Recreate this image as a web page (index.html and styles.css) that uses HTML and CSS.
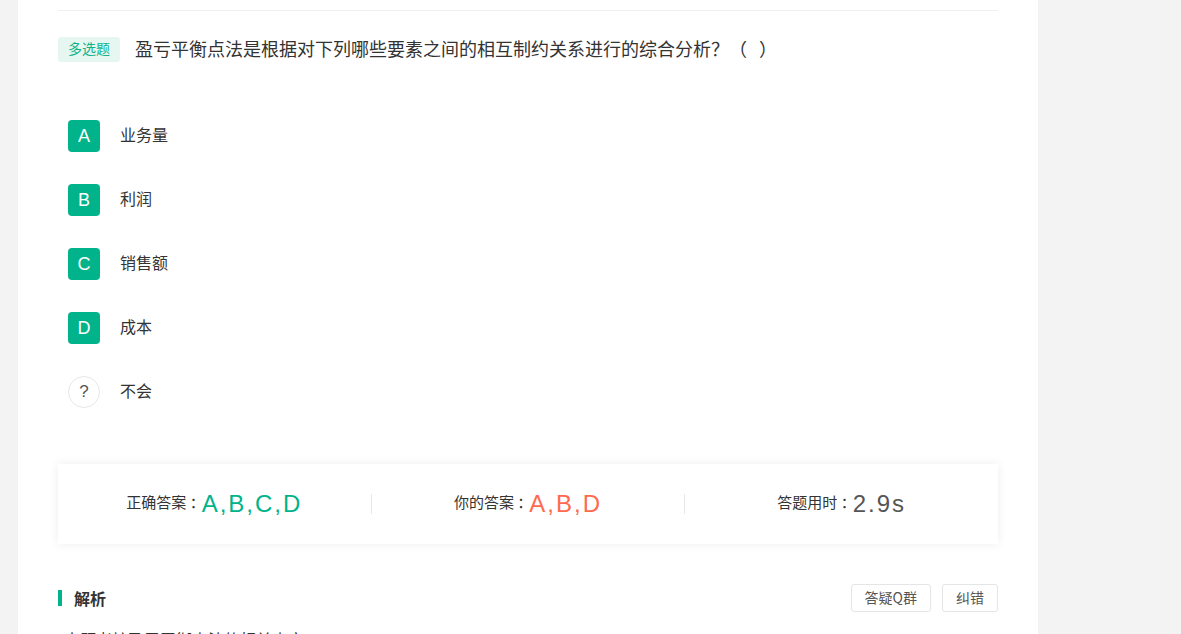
FILE: index.html
```html
<!DOCTYPE html>
<html lang="zh-CN">
<head>
    <meta charset="UTF-8">
    <meta name="viewport" content="width=device-width, initial-scale=1.0">
    <title>题目解析</title>
    <link rel="stylesheet" href="styles.css">
</head>
<body>
    <div class="page">
        <div class="panel">
            <div class="top-line"></div>

            <div class="question">
                <span class="tag">多选题</span>
                <span class="q-text">盈亏平衡点法是根据对下列哪些要素之间的相互制约关系进行的综合分析？（&nbsp;&nbsp;&nbsp;）</span>
            </div>

            <ul class="options">
                <li class="option"><span class="badge">A</span><span class="opt-text">业务量</span></li>
                <li class="option"><span class="badge">B</span><span class="opt-text">利润</span></li>
                <li class="option"><span class="badge">C</span><span class="opt-text">销售额</span></li>
                <li class="option"><span class="badge">D</span><span class="opt-text">成本</span></li>
                <li class="option"><span class="badge badge-unknown">?</span><span class="opt-text">不会</span></li>
            </ul>

            <div class="result">
                <div class="result-item">
                    <span class="label">正确答案 ：</span><span class="value value-right">A,B,C,D</span>
                </div>
                <div class="result-item">
                    <span class="label">你的答案 ：</span><span class="value value-wrong">A,B,D</span>
                </div>
                <div class="result-item">
                    <span class="label">答题用时 ：</span><span class="value value-time">2.9s</span>
                </div>
            </div>

            <div class="analysis-head">
                <h3 class="analysis-title">解析</h3>
                <div class="actions">
                    <button class="btn">答疑Q群</button>
                    <button class="btn">纠错</button>
                </div>
            </div>
            <p class="analysis-text">本题考核盈亏平衡点法的相关内容。</p>
        </div>
    </div>
</body>
</html>
```

FILE: styles.css
```css
body {
    margin: 0;
    background-color: #f3f3f3;
    font-family: "Noto Sans CJK SC", "Liberation Sans", sans-serif;
    color: #333;
    overflow: hidden;
}
.page {
    height: 634px;
    padding-left: 18px;
}
.panel {
    width: 940px;
    height: 100%;
    padding: 10px 40px 0;
    background: #fff;
}
.top-line {
    height: 1px;
    background: #f0f0f0;
}
.question {
    display: flex;
    align-items: center;
    margin-top: 26px;
    height: 25px;
}
.tag {
    height: 25px;
    line-height: 23px;
    padding: 0 10px;
    font-size: 14px;
    color: #12b38a;
    background: #e6f7f2;
    border-radius: 3px;
}
.q-text {
    margin: 0 0 3px 15px;
    font-size: 18px;
    line-height: 24px;
    color: #333;
}
.options {
    list-style: none;
    margin: 42px 0 0;
    padding: 0;
}
.option {
    display: flex;
    align-items: center;
    height: 64px;
    padding-left: 10px;
}
.badge {
    width: 32px;
    height: 32px;
    line-height: 32px;
    text-align: center;
    font-family: "Liberation Sans", Arial, sans-serif;
    font-size: 18px;
    color: #fff;
    background: #00b38a;
    border-radius: 4px;
    box-sizing: border-box;
}
.badge-unknown {
    line-height: 30px;
    font-size: 17px;
    background: #fff;
    color: #555;
    border: 1px solid #e8e8e8;
    border-radius: 50%;
}
.opt-text {
    margin: 0 0 4px 20px;
    font-size: 16px;
    line-height: 22px;
    color: #333;
}
.result {
    display: flex;
    align-items: center;
    height: 80px;
    margin-top: 40px;
    background: #fff;
    box-shadow: 0 0 10px rgba(0,0,0,0.07);
}
.result-item {
    flex: 1;
    display: flex;
    align-items: center;
    justify-content: center;
    border-left: 1px solid #e8e8e8;
    height: 20px;
}
.result-item:first-child {
    border-left: none;
}
.label {
    margin-bottom: 4px;
    font-size: 15px;
    line-height: 20px;
    color: #333;
}
.value {
    margin-left: -3px;
    font-family: "Liberation Sans", Arial, sans-serif;
    font-size: 24px;
    line-height: 28px;
    letter-spacing: 2px;
}
.value-right {
    color: #00b38a;
}
.value-wrong {
    color: #ff6a4f;
}
.value-time {
    color: #555;
}
.analysis-head {
    display: flex;
    align-items: center;
    justify-content: space-between;
    margin-top: 40px;
    height: 28px;
}
.analysis-title {
    margin: 0 0 1px;
    padding-left: 12px;
    border-left: 4px solid #00b38a;
    font-size: 16px;
    line-height: 16px;
    font-weight: bold;
    color: #333;
}
.actions {
    display: flex;
    gap: 11px;
}
.btn {
    height: 28px;
    padding: 0 13px 2px;
    font-family: "Noto Sans CJK SC", "Liberation Sans", sans-serif;
    font-size: 14px;
    color: #555;
    background: #fff;
    border: 1px solid #e5e5e5;
    border-radius: 3px;
    cursor: pointer;
}
.analysis-text {
    margin: 15px 0 0 6px;
    font-size: 16px;
    color: #333;
}
```
